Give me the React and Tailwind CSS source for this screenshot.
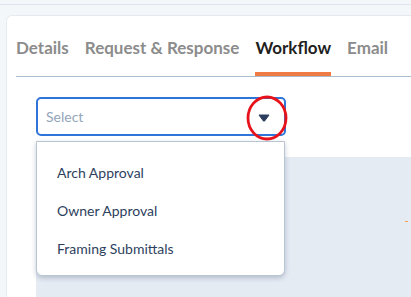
import { useState } from "react";

const tabs = ["Details", "Request & Response", "Workflow", "Email"];
const options = ["Arch Approval", "Owner Approval", "Framing Submittals"];

export default function App() {
  const [active, setActive] = useState("Workflow");

  return (
    <div className="h-[297px] overflow-hidden bg-[#f4f7fa] font-['Lato',sans-serif]">
      <div className="h-[5px] border-b border-[#dfe5ec]" />

      {/* card */}
      <div className="ml-[6px] mt-[10px] h-[300px] rounded-tl-[6px] border border-r-0 border-[#e5eaf0] bg-white pl-[9px] pt-[20px]">
        {/* tabs */}
        <div className="flex gap-[16px] border-b border-[#aabdd0]">
          {tabs.map((t) => (
            <button
              key={t}
              onClick={() => setActive(t)}
              className={
                "border-b-4 pb-[12px] text-[17px] font-bold leading-[24px] whitespace-nowrap " +
                (active === t
                  ? "border-[#f07a43] text-[#1f1f1f]"
                  : "border-transparent text-[#8c8c8c]")
              }
            >
              {t}
            </button>
          ))}
        </div>

        <div className="pl-[20px] pt-[20px]">
          <div className="relative w-[250px]">
            <div className="flex h-[39px] items-center justify-between rounded-[5px] border-2 border-[#2f74d8] pl-[8px] pr-[14px]">
              <span className="text-[14px] text-[#93a5bb]">Select</span>
              <svg width="12" height="8" viewBox="0 0 12 8" className="mt-[2px]">
                <path d="M1 1 L11 1 L6.6 7 Q6 7.6 5.4 7 Z" fill="#2b3e5e" stroke="#2b3e5e" strokeWidth="1" strokeLinejoin="round" />
              </svg>
            </div>

            {/* highlight circle */}
            <svg width="46" height="48" viewBox="0 0 46 48" className="absolute left-[209px] top-[-2px]">
              <ellipse cx="22" cy="23" rx="19" ry="21" fill="none" stroke="#e8121b" strokeWidth="2.8" />
            </svg>

            {/* menu */}
            <div className="absolute left-0 top-[44px] z-10 w-[249px] rounded-b-[6px] border border-[#b9c5d1] bg-white pt-[11px] pb-[8px] shadow-[0_2px_5px_rgba(60,80,110,0.3)]">
              {options.map((o) => (
                <div key={o} className="flex h-[38px] items-center pl-[20px] text-[14px] text-[#2d3f5e]">
                  {o}
                </div>
              ))}
            </div>
          </div>

          <div className="relative mt-[21px] h-[200px] bg-[#e5ebf3]">
            <div className="absolute left-[369px] top-[64px] h-px w-[3px] bg-[#f5a24a]" />
          </div>
        </div>
      </div>
    </div>
  );
}
